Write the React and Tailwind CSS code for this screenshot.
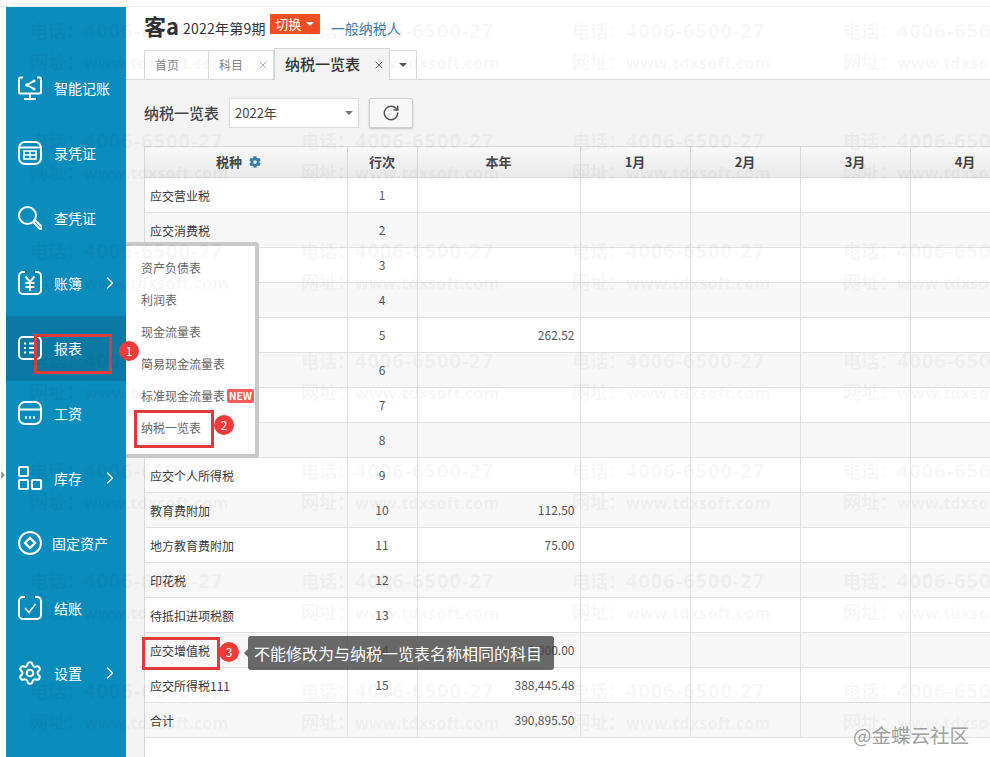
import React from "react";
import { Settings, ChevronRight, RotateCw, X } from "lucide-react";
import { FaCog } from "react-icons/fa";

const cjk = "font-['Noto_Sans_CJK_SC','Noto_Sans',sans-serif]";

// sidebar icons, drawn on a 24 box
const IconShare = () => (
  <svg viewBox="0 0 24 24" className="h-6 w-6" fill="none" stroke="white" strokeWidth="2">
    <path d="M5 1.5H2.5a1.5 1.5 0 0 0-1.5 1.5v13a1.5 1.5 0 0 0 1.5 1.5h19a1.5 1.5 0 0 0 1.5-1.5V3a1.5 1.5 0 0 0-1.5-1.5H19" />
    <path d="M12 18v4M6 23h12" />
    <path d="M16 5l-7 4 7 4" strokeWidth="1.6" />
    <circle cx="16" cy="5" r="1.6" fill="white" stroke="none" />
    <circle cx="9" cy="9" r="1.8" fill="white" stroke="none" />
    <circle cx="16" cy="13" r="1.6" fill="white" stroke="none" />
  </svg>
);
const IconVoucher = () => (
  <svg viewBox="0 0 24 24" className="h-6 w-6" fill="none" stroke="white" strokeWidth="2">
    <rect x="1" y="1" width="22" height="22" rx="6" />
    <path d="M1.5 6.5h21" />
    <rect x="6" y="10" width="12" height="8" strokeWidth="1.6" />
    <path d="M6 14h12M12 10v8" strokeWidth="1.4" />
  </svg>
);
const IconSearch = () => (
  <svg viewBox="0 0 24 24" className="h-6 w-6" fill="none" stroke="white" strokeWidth="2">
    <circle cx="9.5" cy="9.5" r="8.5" />
    <path d="M15.5 16.5l2-2 6 6a1.4 1.4 0 0 1-2 2z" strokeLinejoin="round" />
  </svg>
);
const IconBook = () => (
  <svg viewBox="0 0 24 24" className="h-6 w-6" fill="none" stroke="white" strokeWidth="2">
    <path d="M7 1H5a4 4 0 0 0-4 4v14a4 4 0 0 0 4 4h14a4 4 0 0 0 4-4V5a4 4 0 0 0-4-4h-2" />
    <path d="M7.5 5.5L12 11l4.5-5.5M12 11v9M7.5 12h9M7.5 16h9" />
  </svg>
);
const IconReport = () => (
  <svg viewBox="0 0 24 24" className="h-6 w-6" fill="none" stroke="white" strokeWidth="2">
    <path d="M19 1H5a4 4 0 0 0-4 4v14a4 4 0 0 0 4 4h14a4 4 0 0 0 4-4V5a4 4 0 0 0-4-4z" />
    <path d="M6 7.5h2M11 7.5h7M6 12h2M11 12h7M6 16.5h2M11 16.5h7" />
  </svg>
);
const IconSalary = () => (
  <svg viewBox="0 0 24 24" className="h-6 w-6" fill="none" stroke="white" strokeWidth="2">
    <rect x="1" y="1" width="22" height="22" rx="6" />
    <path d="M1.5 8.5h21" />
    <path d="M7 16.5h2M11 16.5h2M15 16.5h2" strokeWidth="2.4" />
  </svg>
);
const IconStock = () => (
  <svg viewBox="0 0 24 24" className="h-6 w-6" fill="none" stroke="white" strokeWidth="2">
    <rect x="1" y="1" width="9" height="9" rx="1" />
    <rect x="1" y="14" width="9" height="9" rx="1" />
    <rect x="14" y="14" width="9" height="9" rx="1" />
  </svg>
);
const IconAsset = () => (
  <svg viewBox="0 0 24 24" className="h-6 w-6" fill="none" stroke="white" strokeWidth="2">
    <circle cx="12" cy="12" r="11" />
    <path d="M12 7l5 5-5 5-5-5z" strokeWidth="2.4" />
  </svg>
);
const IconClose = () => (
  <svg viewBox="0 0 24 24" className="h-6 w-6" fill="none" stroke="white" strokeWidth="2">
    <path d="M7 1H5a4 4 0 0 0-4 4v14a4 4 0 0 0 4 4h14a4 4 0 0 0 4-4V5a4 4 0 0 0-4-4h-2" />
    <path d="M7 12l4 4.5L17.5 8" strokeWidth="1.6" />
  </svg>
);
const IconSettings = () => <Settings size={26} color="white" strokeWidth={1.9} className="-m-px" />;

const navItems = [
  { label: "智能记账", icon: <IconShare /> },
  { label: "录凭证", icon: <IconVoucher /> },
  { label: "查凭证", icon: <IconSearch /> },
  { label: "账簿", icon: <IconBook />, more: true },
  { label: "报表", icon: <IconReport />, active: true },
  { label: "工资", icon: <IconSalary /> },
  { label: "库存", icon: <IconStock />, more: true },
  { label: "固定资产", icon: <IconAsset />, tight: true },
  { label: "结账", icon: <IconClose /> },
  { label: "设置", icon: <IconSettings />, more: true },
];

const rows = [
  { name: "应交营业税", no: 1 },
  { name: "应交消费税", no: 2 },
  { name: "", no: 3 },
  { name: "", no: 4 },
  { name: "", no: 5, year: "262.52" },
  { name: "", no: 6 },
  { name: "", no: 7 },
  { name: "", no: 8 },
  { name: "应交个人所得税", no: 9 },
  { name: "教育费附加", no: 10, year: "112.50" },
  { name: "地方教育费附加", no: 11, year: "75.00" },
  { name: "印花税", no: 12 },
  { name: "待抵扣进项税额", no: 13 },
  { name: "应交增值税", no: 14, year: "2,000.00" },
  { name: "应交所得税111", no: 15, year: "388,445.48" },
  { name: "合计", no: "", year: "390,895.50" },
];

const months = ["1月", "2月", "3月", "4月"];
const menuItems = ["资产负债表", "利润表", "现金流量表", "简易现金流量表", "标准现金流量表", "纳税一览表"];

const Sidebar = () => (
  <div className="h-[750px] w-[120px] shrink-0 bg-[#0a8cbc] pt-[49px] text-white">
    {navItems.map((item) => (
      <div
        key={item.label}
        className={`flex h-[65px] items-center pb-[2px] pl-3 text-sm ${item.active ? "bg-[#0a7aa4]" : ""}`}
      >
        {item.icon}
        <span className={item.tight ? "ml-[10px]" : "ml-3"}>{item.label}</span>
        {item.more && <ChevronRight size={20} strokeWidth={1.6} className="ml-auto mr-[6px]" />}
      </div>
    ))}
  </div>
);

const Header = () => (
  <div className="h-[73px] border-b border-[#d9d9d9] bg-white pl-[18px]">
    <div className="flex h-[41px] items-start pt-[7px]">
      <span className="text-[22px] font-bold leading-[22px] text-[#333]">客a</span>
      <span className="ml-1 mt-1 text-sm leading-5 tracking-[0.25px] text-[#333]">2022年第9期</span>
      <button className="ml-1 flex h-5 w-[50px] items-center justify-center gap-[5px] bg-[#f34e21] text-[13px] text-white">
        切换
        <span className="border-x-[4px] border-t-[4px] border-x-transparent border-t-white" />
      </button>
      <span className="ml-[11px] mt-1 text-sm leading-5 text-[#3f7ea8]">一般纳税人</span>
    </div>
    <div className="flex h-[31px] items-end">
      <div className="flex h-[29px] w-[65px] items-center border border-b-0 border-[#dcdcdc] pl-[10px] text-xs text-[#888]">
        首页
      </div>
      <div className="flex h-[29px] w-[65px] items-center border border-b-0 border-l-0 border-[#dcdcdc] pl-[10px] text-xs text-[#888]">
        科目
        <X size={12} color="#aaa" className="ml-auto mr-1" />
      </div>
      <div className="z-10 -mb-px flex h-[32px] w-[116px] items-center border border-b-0 border-[#d4d4d4] bg-[#f3f3f3] pl-[10px] text-[15px] font-medium text-[#333]">
        纳税一览表
        <X size={12} color="#666" className="ml-auto mr-1" />
      </div>
      <div className="flex h-[29px] w-[27px] items-center justify-center border border-b-0 border-l-0 border-[#dcdcdc]">
        <span className="border-x-[4px] border-t-[4px] border-x-transparent border-t-[#555]" />
      </div>
    </div>
  </div>
);

const Toolbar = () => (
  <div className="flex h-[66px] items-start pl-[18px] pt-[18px]">
    <span className="flex h-[30px] w-[85px] items-center text-[15px] font-medium text-[#444]">纳税一览表</span>
    <div className="flex h-[30px] w-[130px] items-center justify-between border border-[#dddddd] bg-white pl-[5px] pr-[5px] text-[13px] text-[#444]">
      2022年
      <span className="border-x-[4px] border-t-[4px] border-x-transparent border-t-[#777]" />
    </div>
    <button className="ml-[10px] flex h-[30px] w-[44px] items-center justify-center rounded-[2px] border border-[#cfcfcf] bg-[#f7f7f7] shadow-[0_1px_2px_rgba(0,0,0,0.2)]">
      <RotateCw size={18} color="#555" />
    </button>
  </div>
);

const TaxTable = () => (
  <div className="ml-[18px] h-[611px] border-l border-[#d9d9d9] bg-white">
    <table className="w-[1000px] table-fixed border-collapse text-xs text-[#3a3a3a]">
      <colgroup>
        <col className="w-[202px]" />
        <col className="w-[70px]" />
        <col className="w-[163px]" />
        <col className="w-[110px]" />
        <col className="w-[110px]" />
        <col className="w-[110px]" />
        <col className="w-[110px]" />
        <col className="w-[125px]" />
      </colgroup>
      <thead>
        <tr className="h-[31px] bg-linear-to-b from-[#f8f8f8] to-[#e9e9e9] text-[13px] text-[#444]">
          <th className="border border-l-0 border-[#d9d9d9] text-left font-bold">
            <span className="flex items-center gap-[7px] pl-[71px]">
              税种
              <FaCog size={12} color="#3b7da6" />
            </span>
          </th>
          <th className="border border-[#d9d9d9] font-bold">行次</th>
          <th className="border border-[#d9d9d9] font-bold">本年</th>
          {months.map((m) => (
            <th key={m} className="border border-[#d9d9d9] font-bold">
              {m}
            </th>
          ))}
          <th className="border border-[#d9d9d9]"></th>
        </tr>
      </thead>
      <tbody>
        {rows.map((r) => (
          <tr key={r.no || "total"} className={`h-[35px] ${Number(r.no) % 2 === 0 ? "bg-[#f7f7f7]" : "bg-white"}`}>
            <td className="border border-l-0 border-[#e0e0e0] px-[5px] pt-[2px]">{r.name}</td>
            <td className="border border-[#e0e0e0] text-center text-[#555]">{r.no}</td>
            <td className="border border-[#e0e0e0] pr-[5px] text-right text-[#555]">{r.year}</td>
            {months.map((m) => (
              <td key={m} className="border border-[#e0e0e0]"></td>
            ))}
            <td className="border border-[#e0e0e0]"></td>
          </tr>
        ))}
      </tbody>
    </table>
  </div>
);

// hover menu of 报表
const ReportMenu = () => (
  <div className="absolute left-[126px] top-[242px] h-[216px] w-[133px] rounded-r-[4px] border-[4px] border-l-0 border-[#c9c9c9] bg-white pl-[15px] pt-3 text-xs text-[#666]">
    {menuItems.map((m) => (
      <div key={m} className="flex h-8 items-start whitespace-nowrap leading-[20px]">
        {m}
        {m === "标准现金流量表" && (
          <span className="ml-[2px] mt-[3px] rounded-[2px] bg-[#f45c5c] px-[2px] text-[10px] font-bold leading-[14px] text-white">
            NEW
          </span>
        )}
      </div>
    ))}
  </div>
);

const Badge = ({ n, className }) => (
  <span
    className={`absolute flex h-5 w-5 items-center justify-center rounded-full bg-[#f13a3a] text-xs text-white ${className}`}
  >
    {n}
  </span>
);

// annotations drawn over the screenshot
const Annotations = () => (
  <>
    <div className="absolute left-[34px] top-[334px] h-10 w-[78px] border-[3px] border-[#e03a3a]" />
    <Badge n="1" className="left-[119px] top-[341px]" />
    <div className="absolute left-[134px] top-[410px] h-[38px] w-20 border-[3px] border-[#e03a3a]" />
    <Badge n="2" className="left-[214px] top-[415px]" />
    <div className="absolute left-[142px] top-[637px] h-[33px] w-[78px] border-[3px] border-[#e03a3a]" />
    <Badge n="3" className="left-[219px] top-[642px]" />
    <div className="absolute left-[248px] top-[636px] flex h-[34px] w-[306px] items-center rounded-[3px] bg-[#444444]/80 pl-[6px] text-base text-white">
      <span className="absolute left-[-4px] border-y-[4px] border-r-[4px] border-y-transparent border-r-[#444444]/80" />
      不能修改为与纳税一览表名称相同的科目
    </div>
  </>
);

const Watermark = () => (
  <div className="pointer-events-none absolute left-[30px] top-[15px] grid grid-cols-[repeat(4,271px)] grid-rows-[repeat(7,110px)]">
    {Array.from({ length: 28 }).map((_, i) => (
      <div key={i} className="whitespace-nowrap font-bold text-black/[0.05]">
        <div className="text-lg leading-[30px]">
          电话：<span className="font-['Open_Sans'] text-[20px] tracking-[1px]">4006-6500-27</span>
        </div>
        <div className="text-lg leading-[31px]">
          网址：<span className="font-['Open_Sans'] text-base tracking-[0.2px]">www.tdxsoft.com</span>
        </div>
      </div>
    ))}
  </div>
);

export default function App() {
  return (
    <div className={`relative h-[757px] w-[990px] overflow-hidden bg-white ${cjk}`}>
      <div className="h-[7px] border-b border-[#eeeeee]" />
      <div className="flex">
        <div className="w-[6px] shrink-0 pl-[1px] pt-[464px]">
          <div className="border-y-[4px] border-l-[4px] border-y-transparent border-l-[#999]" />
        </div>
        <Sidebar />
        <div className="min-w-0 flex-1 overflow-hidden">
          <Header />
          <div className="h-[677px] overflow-hidden bg-[#f3f3f3]">
            <Toolbar />
            <TaxTable />
          </div>
        </div>
      </div>
      <ReportMenu />
      <Annotations />
      <Watermark />
      <div className="absolute left-[853px] top-[720px] text-[19.5px] text-[#a0a0a0]">@金蝶云社区</div>
    </div>
  );
}
